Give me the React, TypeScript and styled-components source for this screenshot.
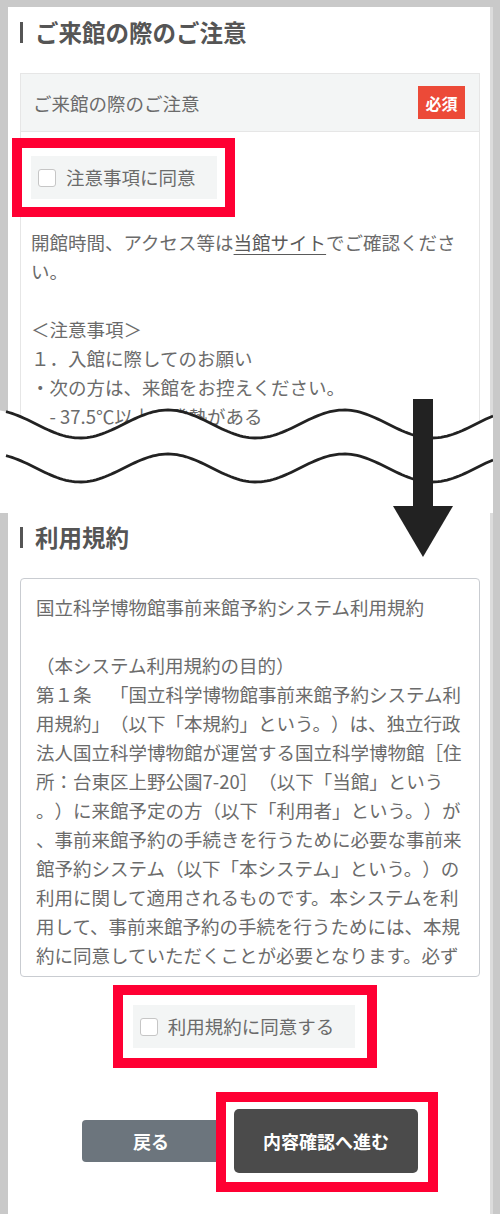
import React from "react";
import styled, { createGlobalStyle } from "styled-components";

const GlobalStyle = createGlobalStyle`
  html, body { margin: 0; padding: 0; background: #c9c9c9; }
  body {
    font-family: "Noto Sans CJK JP", "Noto Sans", sans-serif;
    text-spacing-trim: space-all;
  }
  * { box-sizing: border-box; }
`;

const Page = styled.div`
  position: relative;
  width: 500px;
  height: 1214px;
  background: #c9c9c9;
  overflow: hidden;
  display: flex;
  flex-direction: column;
`;

const Shot = styled.div<{ $top: number; $height: number }>`
  height: ${(p) => p.$height}px;
  padding: ${(p) => p.$top}px 7px 0 8px;
  display: flex;
  flex-shrink: 0;
`;

const Panel = styled.div<{ $padTop: number }>`
  flex: 1;
  background: #fff;
  border-right: 3px solid #dcdcdc;
  padding: ${(p) => p.$padTop}px 10px 0 12px;
  overflow: hidden;
  display: flex;
  flex-direction: column;
`;

const SectionTitle = styled.h2`
  margin: 0;
  border-left: 3px solid #555;
  padding-left: 12px;
  font-size: 23.5px;
  font-weight: 700;
  color: #555;
  line-height: 21px;
`;

const NoticeBox = styled.div`
  margin-top: 30px;
  border: 1px solid #e6e6e6;
  border-bottom: none;
`;

const NoticeHeader = styled.div`
  display: flex;
  align-items: center;
  justify-content: space-between;
  height: 58px;
  padding: 0 14px 0 12px;
  background: #f3f5f5;
  border-bottom: 1px solid #e6e6e6;
  font-size: 18.5px;
  color: #6b6b6b;
`;

const Badge = styled.span`
  display: flex;
  align-items: center;
  justify-content: center;
  width: 47px;
  height: 33px;
  background: #ec4a38;
  color: #fff;
  font-size: 16px;
  font-weight: 700;
`;

const NoticeBody = styled.div`
  padding: 24px 10px 0 10px;
`;

const AgreeLabel = styled.label`
  position: relative;
  display: inline-flex;
  align-items: center;
  gap: 10px;
  height: 43px;
  padding: 0 21px 0 7px;
  background: #f3f5f5;
  font-size: 18.5px;
  color: #6b6b6b;
  line-height: 1;
`;

const CheckBox = styled.span`
  width: 18px;
  height: 18px;
  background: #fff;
  border: 1px solid #c6c6c6;
  border-radius: 3px;
  flex-shrink: 0;
`;

const Highlight = styled.span<{ $inset: string }>`
  position: absolute;
  inset: ${(p) => p.$inset};
  border: 10px solid #ff0033;
  pointer-events: none;
`;

const NoticeText = styled.div`
  margin-top: 29px;
  font-size: 18.5px;
  line-height: 29px;
  color: #6b6b6b;
  white-space: pre-line;
`;

const SiteLink = styled.a`
  color: #5a5a5a;
  text-decoration: underline;
  text-underline-offset: 4px;
`;

const TermsBox = styled.div`
  margin-top: 30px;
  height: 399px;
  flex-shrink: 0;
  border: 1px solid #c9ccd1;
  border-radius: 4px;
  padding: 13.5px 14px 0 15px;
  overflow: hidden;
  font-size: 18.5px;
  line-height: 29px;
  color: #6b6b6b;
  white-space: pre;
`;

const AgreeRow = styled.div`
  margin-top: 28px;
  display: flex;
  justify-content: center;
  padding-right: 12px;
`;

const ButtonRow = styled.div`
  margin-top: 61px;
  display: flex;
  justify-content: center;
  align-items: center;
  gap: 14px;
`;

const Button = styled.button<{ $variant: "back" | "next" }>`
  position: relative;
  border: none;
  border-radius: ${(p) => (p.$variant === "next" ? 5 : 4)}px;
  width: ${(p) => (p.$variant === "next" ? 184 : 138)}px;
  height: ${(p) => (p.$variant === "next" ? 64 : 42)}px;
  background: ${(p) => (p.$variant === "next" ? "#4b4b4b" : "#6c757d")};
  color: #fff;
  font-family: "Noto Sans CJK JP", "Noto Sans", sans-serif;
  font-size: 18px;
  font-weight: 700;
  padding: 0;
`;

const WaveLayer = styled.svg`
  position: absolute;
  left: 0;
  top: 400px;
  width: 493px;
  height: 113px;
`;

const ArrowLayer = styled.svg`
  position: absolute;
  left: 393px;
  top: 399px;
  width: 60px;
  height: 158px;
`;

const waveY = (x: number, base: number) => base + 14 * Math.cos((2 * Math.PI * (x - 80)) / 176);

const wavePoints = (x0: number, x1: number, base: number) => {
  const pts: string[] = [];
  for (let x = x0; x <= x1; x += 3) pts.push(`${x},${waveY(x, base).toFixed(2)}`);
  pts.push(`${x1},${waveY(x1, base).toFixed(2)}`);
  return pts;
};

const Wave: React.FC = () => {
  const fill = `M0,${waveY(0, 24).toFixed(2)} L${wavePoints(0, 493, 24).join(" L")} L493,113 L0,113 Z`;
  return (
    <WaveLayer viewBox="0 0 493 113">
      <path d={fill} fill="#fff" />
      <polyline points={wavePoints(6, 493, 24).join(" ")} fill="none" stroke="#222" strokeWidth={2.8} />
      <polyline points={wavePoints(6, 493, 68).join(" ")} fill="none" stroke="#222" strokeWidth={2.8} />
    </WaveLayer>
  );
};

const Arrow: React.FC = () => (
  <ArrowLayer viewBox="0 0 60 158">
    <rect x={20} y={0} width={20} height={108} fill="#222" />
    <polygon points="0,107 60,107 30,158" fill="#222" />
  </ArrowLayer>
);

const termsText = [
  "国立科学博物館事前来館予約システム利用規約",
  "",
  "（本システム利用規約の目的）",
  "第１条　「国立科学博物館事前来館予約システム利",
  "用規約」（以下「本規約」という。）は、独立行政",
  "法人国立科学博物館が運営する国立科学博物館［住",
  "所：台東区上野公園7-20］（以下「当館」という",
  "。）に来館予定の方（以下「利用者」という。）が",
  "、事前来館予約の手続きを行うために必要な事前来",
  "館予約システム（以下「本システム」という。）の",
  "利用に関して適用されるものです。本システムを利",
  "用して、事前来館予約の手続を行うためには、本規",
  "約に同意していただくことが必要となります。必ず",
  "本規約をお読みください。",
].join("\n");

export default function App() {
  return (
    <>
      <GlobalStyle />
      <Page>
        <Shot $top={7} $height={513}>
          <Panel $padTop={15}>
            <SectionTitle>ご来館の際のご注意</SectionTitle>
            <NoticeBox>
              <NoticeHeader>
                <span>ご来館の際のご注意</span>
                <Badge>必須</Badge>
              </NoticeHeader>
              <NoticeBody>
                <AgreeLabel>
                  <CheckBox />
                  注意事項に同意
                  <Highlight $inset="-18px -18px -18px -19px" />
                </AgreeLabel>
                <NoticeText>
                  開館時間、アクセス等は<SiteLink>当館サイト</SiteLink>でご確認ください。
                  {"\n\n"}＜注意事項＞{"\n"}１．入館に際してのお願い{"\n"}・次の方は、来館をお控えください。{"\n"}
                  {"　- 37.5℃以上の発熱がある\n　- 咳・咽頭痛などの症状がある\n　- 体調がすぐれない"}
                </NoticeText>
              </NoticeBody>
            </NoticeBox>
          </Panel>
        </Shot>
        <Shot $top={0} $height={701}>
          <Panel $padTop={14}>
            <SectionTitle>利用規約</SectionTitle>
            <TermsBox>{termsText}</TermsBox>
            <AgreeRow>
              <AgreeLabel>
                <CheckBox />
                利用規約に同意する
                <Highlight $inset="-20px -22px -20px -20px" />
              </AgreeLabel>
            </AgreeRow>
            <ButtonRow>
              <Button $variant="back">戻る</Button>
              <Button $variant="next">
                内容確認へ進む
                <Highlight $inset="-17px -20px -19px -18px" />
              </Button>
            </ButtonRow>
          </Panel>
        </Shot>
        <Wave />
        <Arrow />
      </Page>
    </>
  );
}
